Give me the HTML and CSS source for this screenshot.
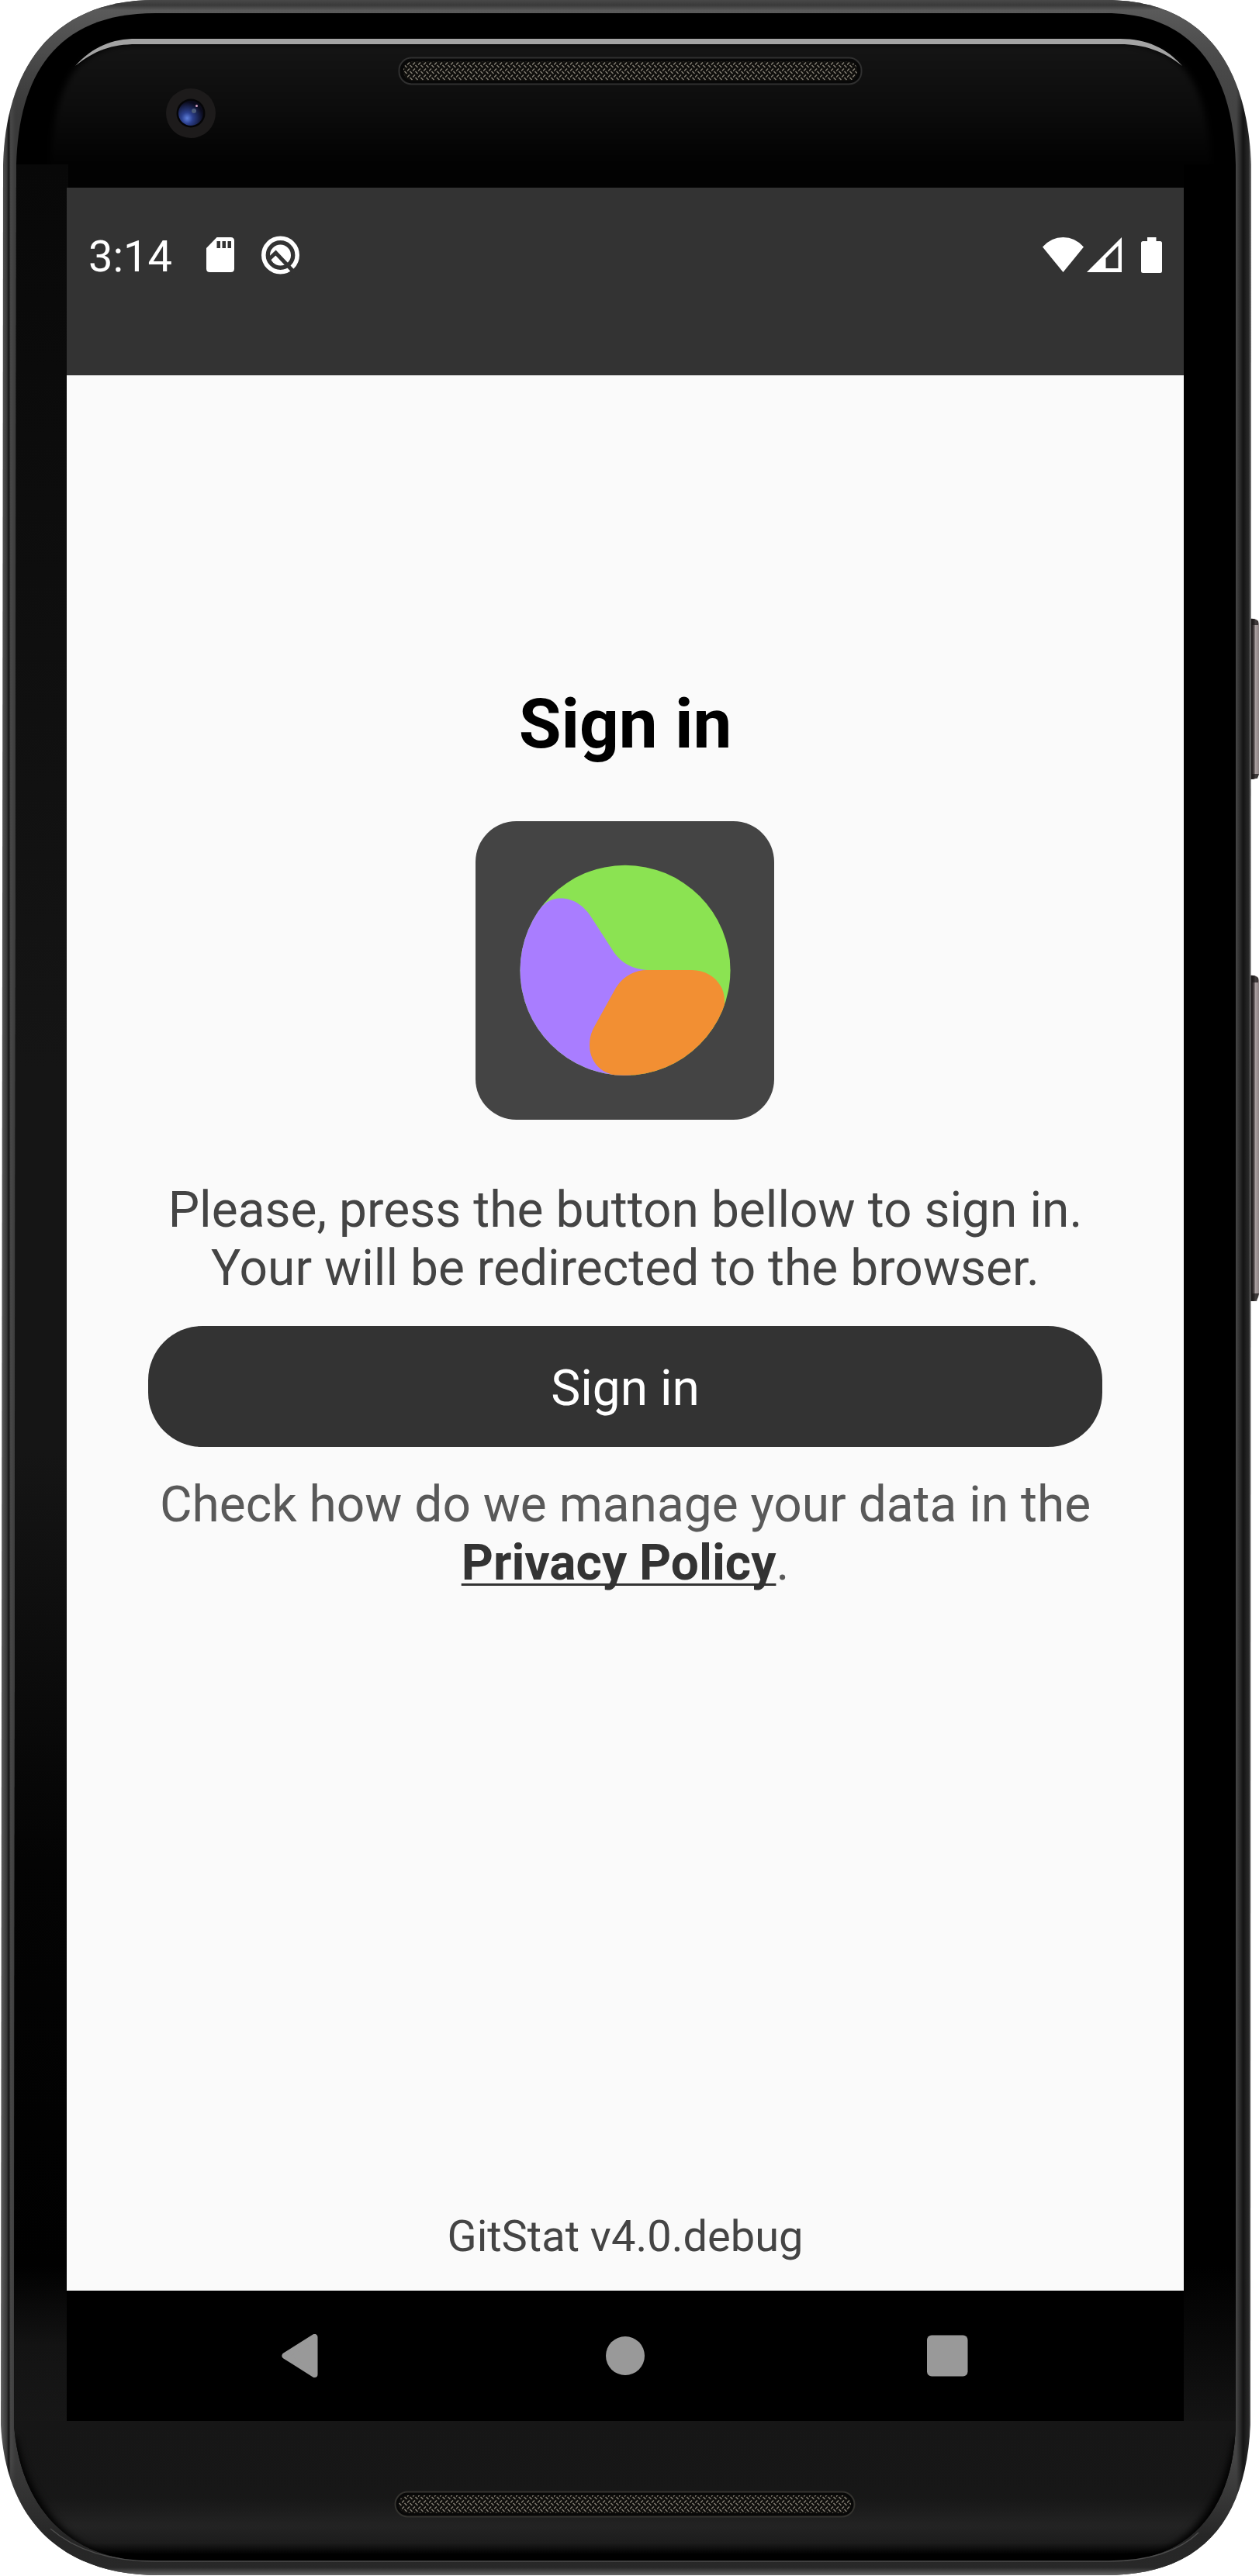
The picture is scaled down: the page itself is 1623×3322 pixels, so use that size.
FILE: index.html
```html
<!DOCTYPE html>
<html lang="en">
<head>
<meta charset="utf-8">
<title>GitStat – Sign in</title>
<link rel="stylesheet" href="styles.css">
</head>
<body>
<div class="device">
  <svg class="frame" viewBox="0 0 1623 3322" width="1623" height="3322" aria-hidden="true">
    <defs>
      <linearGradient id="rimSide" gradientUnits="userSpaceOnUse" x1="0" x2="1613" y1="0" y2="0">
        <stop offset="0" stop-color="#6a6a6a"/><stop offset=".002" stop-color="#555"/><stop offset=".0055" stop-color="#383838"/><stop offset=".007" stop-color="#141414"/>
        <stop offset=".0085" stop-color="#484848"/><stop offset=".0125" stop-color="#3a3a3a"/>
        <stop offset=".988" stop-color="#444"/><stop offset=".991" stop-color="#2c2c2c"/><stop offset=".9935" stop-color="#141414"/><stop offset=".998" stop-color="#292929"/><stop offset="1" stop-color="#777"/>
      </linearGradient>
      <linearGradient id="rimFade" x1="0" x2="0" y1="0" y2="1">
        <stop offset="0" stop-color="#484848"/><stop offset=".002" stop-color="#3a3a3a"/><stop offset=".004" stop-color="#5a5a5a"/><stop offset=".02" stop-color="#4c4c4c"/><stop offset=".045" stop-color="#444" stop-opacity="0"/>
        <stop offset=".955" stop-color="#2c2c2c" stop-opacity="0"/><stop offset=".985" stop-color="#262626"/><stop offset=".997" stop-color="#282828"/><stop offset="1" stop-color="#666"/>
      </linearGradient>
      <linearGradient id="glassLeft" gradientUnits="userSpaceOnUse" x1="0" x2="0" y1="212" y2="3127">
        <stop offset="0" stop-color="#080808"/><stop offset=".15" stop-color="#0d0d0d"/><stop offset=".4" stop-color="#151515"/><stop offset=".57" stop-color="#151515"/><stop offset=".75" stop-color="#040404"/><stop offset=".93" stop-color="#010101"/><stop offset=".965" stop-color="#131313"/><stop offset="1" stop-color="#171717"/>
      </linearGradient>
      <linearGradient id="glassRight" gradientUnits="userSpaceOnUse" x1="0" x2="0" y1="212" y2="3127">
        <stop offset="0" stop-color="#000"/><stop offset=".93" stop-color="#000"/><stop offset="1" stop-color="#141414"/>
      </linearGradient>
      <linearGradient id="topPanel" gradientUnits="userSpaceOnUse" x1="0" x2="0" y1="57" y2="212">
        <stop offset="0" stop-color="#151515"/><stop offset=".5" stop-color="#0d0d0d"/><stop offset="1" stop-color="#020202"/>
      </linearGradient>
      <linearGradient id="bottomPanel" gradientUnits="userSpaceOnUse" x1="0" x2="0" y1="3122" y2="3303">
        <stop offset="0" stop-color="#161616"/><stop offset=".55" stop-color="#171717"/><stop offset=".75" stop-color="#232323"/><stop offset=".87" stop-color="#1c1c1c"/><stop offset=".95" stop-color="#000"/>
      </linearGradient>
      <linearGradient id="key" x1="0" x2="1" y1="0" y2="0">
        <stop offset="0" stop-color="#151313"/><stop offset=".3" stop-color="#1e1a1b"/><stop offset=".5" stop-color="#4d4647"/><stop offset=".65" stop-color="#a89e9f"/><stop offset="1" stop-color="#8d8384"/>
      </linearGradient>
      <radialGradient id="lens" cx=".35" cy=".7" r=".65">
        <stop offset="0" stop-color="#5f80dc"/><stop offset=".35" stop-color="#2b3f8c"/><stop offset="1" stop-color="#0b0b1c"/>
      </radialGradient>
      <pattern id="mesh" width="7" height="8" patternUnits="userSpaceOnUse">
        <rect width="7" height="8" fill="#100f0d"/>
        <path d="M0 3.500 3 .5M3.500 4 6.500 7" stroke="#807b70" stroke-width="1.500"/>
      </pattern>
      <filter id="soft" x="-10%" y="-10%" width="120%" height="120%" color-interpolation-filters="sRGB"><feGaussianBlur stdDeviation="5"/></filter>
      <filter id="softPanel" x="-5%" y="-20%" width="110%" height="140%" color-interpolation-filters="sRGB"><feGaussianBlur stdDeviation="4"/></filter>
      <clipPath id="glass"><path d="M21 212C24 100 70 17 200 17H1425C1540 17 1590 95 1593 212V3127C1590 3230 1540 3303 1430 3303H200C85 3303 26 3230 18 3127Z"/></clipPath>
      <clipPath id="upper"><rect x="16" y="52" width="1580" height="160"/></clipPath>
    </defs>
    <path d="M1610 800q0-3 6-2 6 0 7 6v194q-1 6-7 7h-6zM1610 1260q0-3 6-2 6 0 7 6v405q-1 8-7 9h-6z" fill="url(#key)"/>
    <path d="M1612 798h5l5 3v5h-10zM1612 998h11l-2 6h-9zM1612 1258h5l5 3v6h-10zM1612 1668h11l-3 10h-8z" fill="#1c191a" fill-opacity=".75"/>
    <path d="M4 212C7 95 62 0 200 0H1425C1555 0 1608 88 1613 212L1612 3127C1606 3250 1550 3321 1425 3321H205C75 3321 7 3245 1 3127Z" fill="url(#rimSide)"/>
    <path d="M4 212C7 95 62 0 200 0H1425C1555 0 1608 88 1613 212L1612 3127C1606 3250 1550 3321 1425 3321H205C75 3321 7 3245 1 3127Z" fill="url(#rimFade)"/>
    <g clip-path="url(#glass)">
      <rect width="1623" height="3322"/>
      <rect x="16" y="212" width="72" height="2920" fill="url(#glassLeft)"/>
      <rect x="1526" y="212" width="70" height="2920" fill="url(#glassRight)"/>
      <path d="M88 212H1526V242H88Z" fill="#020202"/>
      <g clip-path="url(#upper)">
        <path d="M64 226C66 140 84 105 100 86 120 66 145 57 176 57H1444C1480 57 1505 68 1524 86 1550 115 1560 160 1562 226Z" fill="url(#topPanel)" filter="url(#softPanel)"/>
      </g>
      <path d="M16 3122H1596V3310H16Z" fill="url(#bottomPanel)"/>
      <path d="M12 3145C30 3235 90 3315 200 3315H1430C1530 3315 1585 3235 1600 3145" fill="none" stroke="#000" stroke-width="18" filter="url(#soft)"/>
    </g>
    <path d="M65 3261C100 3291 145 3303 200 3303H1430C1480 3303 1520 3290 1545 3266" fill="none" stroke="#4c4c4c" stroke-width="1.500"/>
    <path d="M97 85C120 60 144 50 176 50H1444C1478 50 1504 62 1524 85 1500 66 1475 57 1444 57H176C144 57 122 65 97 85Z" fill="#a3a3a3"/>
    <rect x="514.500" y="74.500" width="596" height="34" rx="16" fill="#080808" stroke="#303030" stroke-width="2"/>
    <rect x="520" y="79" width="585" height="25" rx="12" fill="url(#mesh)"/>
    <rect x="509.500" y="3213.500" width="592" height="32" rx="16" fill="#080808" stroke="#34332f" stroke-width="2"/>
    <rect x="514" y="3218" width="583" height="23" rx="11.500" fill="url(#mesh)"/>
    <circle cx="246" cy="146" r="32" fill="#1d1b1b"/>
    <circle cx="246" cy="146" r="18.500" fill="#050507"/>
    <circle cx="246" cy="146" r="16" fill="url(#lens)"/>
    <circle cx="250" cy="143" r="3" fill="#4b5a78"/><circle cx="253.500" cy="136.500" r="1.500" fill="#d9a6c8"/>
  </svg>

  <main class="screen">
    <header class="statusbar">
      <span class="time">3:14</span>
      <svg class="sd" viewBox="0 0 36 45" width="36" height="45"><path fill="#fff" fill-rule="evenodd" d="M13.500 0H31.500Q36 0 36 4.500V40.500Q36 45 31.500 45H4.500Q0 45 0 40.500V14ZM13.500 5V14H18V5ZM20.500 5V14H25V5ZM27.500 5V14H32V5Z"/></svg>
      <svg class="q" viewBox="0 0 49 50" width="49" height="50">
        <circle cx="24.500" cy="25" r="21.700" fill="none" stroke="#fff" stroke-width="5.600"/>
        <circle cx="24.500" cy="25" r="13.500" fill="#fff"/>
        <path d="M9 31 18.500 22 43 48" fill="none" stroke="#333" stroke-width="5"/>
      </svg>
      <span class="spacer"></span>
      <svg class="wifi" viewBox="0 0 53 45" width="53" height="45"><path fill="#fff" d="M0 12.500Q11 0 26.500 0T53 12.500L26.500 45Z"/></svg>
      <svg class="cell" viewBox="0 0 45 45" width="45" height="45"><path fill="#fff" fill-rule="evenodd" d="M0 45 45 0V45ZM24.500 27V40H40.500V11Z"/></svg>
      <svg class="battery" viewBox="0 0 27 46" width="27" height="46"><path fill="#fff" d="M8 0H19.500V5H24.500Q27 5 27 7.500V43.500Q27 46 24.500 46H2.500Q0 46 0 43.500V7.500Q0 5 2.500 5H8Z"/></svg>
    </header>

    <section class="content">
      <h1 class="title">Sign in</h1>
      <svg class="logo" viewBox="0 0 385 385" width="385" height="385" role="img" aria-label="GitStat">
        <defs><clipPath id="disc"><circle cx="193" cy="192.300" r="135.500"/></clipPath></defs>
        <rect width="385" height="385" rx="52.500" fill="#444"/>
        <g clip-path="url(#disc)">
          <rect x="50" y="50" width="290" height="290" fill="#8be352"/>
          <path fill="#a97dff" d="M50 50V340H200V215L230 192H221C204 191 189 184 178.700 169.500L150 125C141 110 127 99.500 110 99.500 101 99.500 93 102 87 109Z"/>
          <path fill="#f28f33" d="M221 192H279C302 192 321 209 321 231.500V237.300L345 250V345H190L173.700 326C157 321 147 306 147 289 147 280 149 272 153.700 264L178.700 218.900C188 201 204 192 221 192Z"/>
        </g>
      </svg>
      <p class="hint">Please, press the button bellow to sign in.<br>Your will be redirected to the browser.</p>
      <button class="signin" type="button">Sign in</button>
      <p class="policy">Check how do we manage your data in the<br><a class="link" href="#">Privacy Policy</a>.</p>
      <p class="version">GitStat v4.0.debug</p>
    </section>

    <nav class="navbar">
      <svg viewBox="0 0 56 56" width="56" height="56"><path d="M4.500 28 42.500 4V52Z" fill="#999" stroke="#999" stroke-width="8" stroke-linejoin="round"/></svg>
      <svg viewBox="0 0 56 56" width="56" height="56"><circle cx="28" cy="28" r="25" fill="#999"/></svg>
      <svg viewBox="0 0 56 56" width="56" height="56"><rect x="2" y="1.500" width="52.500" height="53" rx="6" fill="#999"/></svg>
    </nav>
  </main>
</div>
</body>
</html>
```

FILE: styles.css
```css
body {
  margin: 0;
  background: #fff;
  font-family: Roboto, "Liberation Sans", sans-serif;
}

.device {
  display: grid;
  width: 1623px;
  height: 3322px;
  overflow: hidden;
}

.frame,
.screen {
  grid-area: 1 / 1;
}

.screen {
  display: flex;
  flex-direction: column;
  width: 1440px;
  height: 2880px;
  margin: 242px 0 0 86px;
  background: #fafafa;
}

.statusbar {
  display: flex;
  align-items: center;
  box-sizing: border-box;
  height: 242px;
  padding: 0 28px 69px 28px;
  background: #333;
  color: #fff;
}

.time {
  padding-top: 5px;
  font-size: 56px;
  line-height: 66px;
}

.sd {
  margin-left: 44px;
}

.q {
  margin-left: 35px;
}

.spacer {
  flex: 1;
}

.cell {
  margin-left: 4px;
}

.battery {
  margin-left: 25px;
}

.content {
  display: flex;
  flex: 1;
  flex-direction: column;
  align-items: center;
  padding: 398px 105px 37px;
  font-size: 64px;
  line-height: 75px;
  text-align: center;
}

.title {
  margin: 0 0 74px;
  font-size: 89px;
  font-weight: 700;
  line-height: 103px;
  color: #000;
}

.logo {
  margin-right: 1px;
}

.hint {
  margin: 79px 0 37px;
  color: #444;
  letter-spacing: 0.04px;
}

.signin {
  align-self: stretch;
  height: 156px;
  padding: 5px 0 0;
  border: 0;
  border-radius: 70px;
  background: #333;
  color: #fff;
  font: inherit;
}

.policy {
  margin: 37px 0 0;
  color: #595959;
}

.link {
  color: #333;
  font-weight: 700;
  text-decoration-line: underline;
  text-decoration-skip-ink: none;
  text-decoration-thickness: 3px;
  text-underline-offset: 5px;
}

.version {
  margin: auto 0 0;
  font-size: 56px;
  line-height: 66px;
  color: #444;
}

.navbar {
  display: flex;
  align-items: center;
  justify-content: center;
  gap: 359px;
  height: 168px;
  background: #000;
}
```
